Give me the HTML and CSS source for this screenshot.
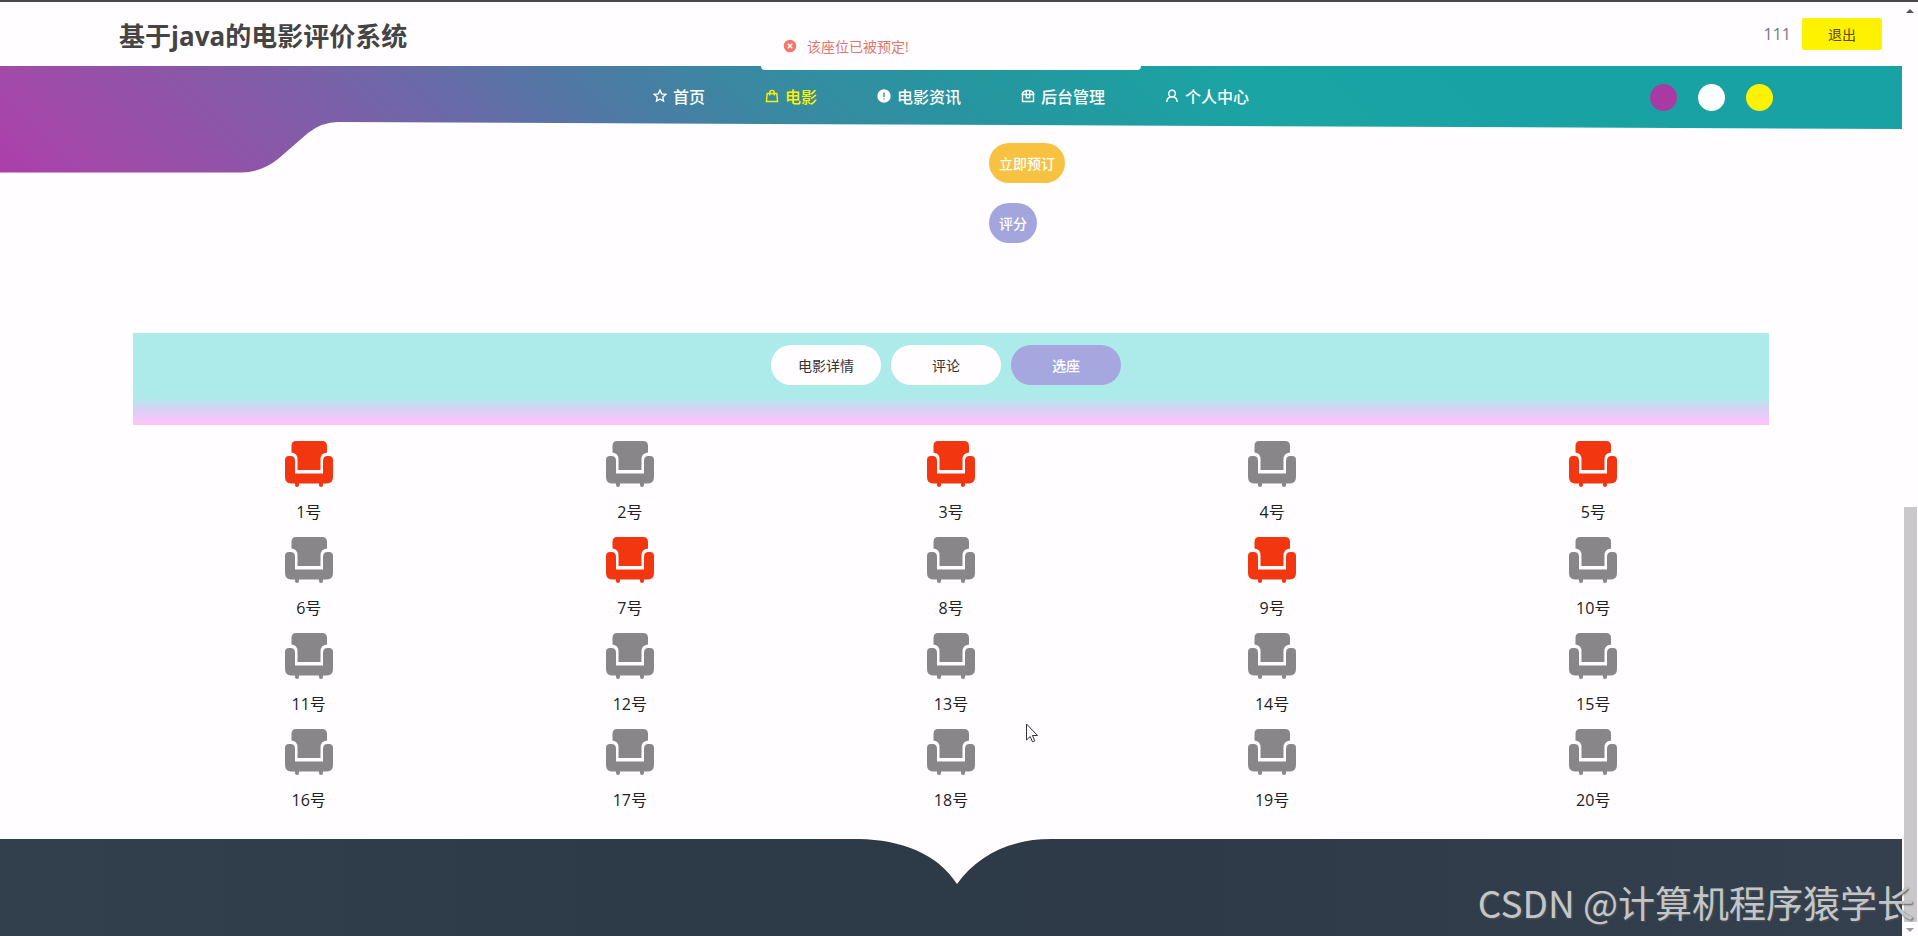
FILE: index.html
```html
<!DOCTYPE html>
<html lang="zh-CN">
<head>
    <meta charset="UTF-8">
    <title>基于java的电影评价系统</title>
    <link rel="stylesheet" href="styles.css">
</head>
<body>
    <svg class="symbols" aria-hidden="true">
        <symbol id="seat" viewBox="0 0 48 48">
            <path d="M11 1h26q5 0 5 5v6.500q-6.500 .5-6.500 7V30h-23V19.500q0-6.500-6-7V6q0-5 4.500-5z"/>
            <path d="M4 16h1.500q4.500 0 4.500 5v12.500h28V21q0-5 4.500-5H44q4 0 4 4v17q0 6-6 6.500h-4v1.500a2 2 0 0 1-4 0v-1.500H14v1.500a2 2 0 0 1-4 0v-1.500H6q-6-.5-6-6.500V20q0-4 4-4z"/>
        </symbol>
    </svg>

    <div class="page">
        <header class="header">
            <h1 class="title">基于java的电影评价系统</h1>
            <div class="user">
                <span class="user-name">111</span>
                <button class="logout">退出</button>
            </div>
        </header>

        <nav class="nav">
            <svg class="nav-bg" viewBox="0 0 1902 107" preserveAspectRatio="none" aria-hidden="true">
                <defs>
                    <linearGradient id="navFill" gradientUnits="userSpaceOnUse" x1="0" y1="107" x2="800" y2="-693">
                        <stop offset="0" stop-color="#ad3eaa"/>
                        <stop offset=".07" stop-color="#a14aaa"/>
                        <stop offset=".18" stop-color="#8b57a9"/>
                        <stop offset=".31" stop-color="#6d68a8"/>
                        <stop offset=".43" stop-color="#4c7ba4"/>
                        <stop offset=".52" stop-color="#3a88a2"/>
                        <stop offset=".66" stop-color="#25969f"/>
                        <stop offset=".83" stop-color="#1ba4a4"/>
                        <stop offset="1" stop-color="#18a2a3"/>
                    </linearGradient>
                </defs>
                <path fill="url(#navFill)" d="M0 0H1902V63L338 56Q322 56 308 67L278 93Q262 106 242 106.500H0z"/>
            </svg>
            <div class="menu">
                <a class="menu-item" href="#">
                    <svg class="icon" viewBox="0 0 14 14"><path d="M7 1.300l1.700 3.600 4 .5-2.900 2.700.7 3.900L7 10.100 3.500 12l.7-3.900L1.300 5.400l4-.5z"/></svg>
                    首页
                </a>
                <a class="menu-item active" href="#">
                    <svg class="icon" viewBox="0 0 14 14"><path d="M2.200 4.500h9.600l.8 8H1.400zM4.700 6.500V4a2.300 2.600 0 0 1 4.600 0v2.500"/></svg>
                    电影
                </a>
                <a class="menu-item" href="#">
                    <svg class="icon" viewBox="0 0 14 14"><circle class="solid" cx="7" cy="7" r="6"/><path class="mark" d="M7 3.500v4.500M7 9.500v1"/></svg>
                    电影资讯
                </a>
                <a class="menu-item" href="#">
                    <svg class="icon" viewBox="0 0 14 14"><path d="M.5 5.500h13M1.500 5.500v7h11v-7M1.200 5.500Q2 1.500 7 1.500T12.800 5.500M5.300 1.800v7h3.400v-7"/></svg>
                    后台管理
                </a>
                <a class="menu-item" href="#">
                    <svg class="icon" viewBox="0 0 14 14"><circle cx="7" cy="4.500" r="3.300"/><path d="M1.800 13q.2-5.200 5.200-5.200T12.200 13"/></svg>
                    个人中心
                </a>
            </div>
            <div class="themes">
                <button class="theme purple" aria-label="紫色"></button>
                <button class="theme white" aria-label="白色"></button>
                <button class="theme yellow" aria-label="黄色"></button>
            </div>
        </nav>

        <main class="content">
            <div class="actions">
                <button class="action book">立即预订</button>
                <button class="action rate">评分</button>
            </div>

            <div class="tabs">
                <button class="tab">电影详情</button>
                <button class="tab">评论</button>
                <button class="tab current">选座</button>
            </div>

            <div class="seats">
                <button class="seat taken"><svg><use href="#seat"/></svg>1号</button>
                <button class="seat"><svg><use href="#seat"/></svg>2号</button>
                <button class="seat taken"><svg><use href="#seat"/></svg>3号</button>
                <button class="seat"><svg><use href="#seat"/></svg>4号</button>
                <button class="seat taken"><svg><use href="#seat"/></svg>5号</button>
                <button class="seat"><svg><use href="#seat"/></svg>6号</button>
                <button class="seat taken"><svg><use href="#seat"/></svg>7号</button>
                <button class="seat"><svg><use href="#seat"/></svg>8号</button>
                <button class="seat taken"><svg><use href="#seat"/></svg>9号</button>
                <button class="seat"><svg><use href="#seat"/></svg>10号</button>
                <button class="seat"><svg><use href="#seat"/></svg>11号</button>
                <button class="seat"><svg><use href="#seat"/></svg>12号</button>
                <button class="seat"><svg><use href="#seat"/></svg>13号</button>
                <button class="seat"><svg><use href="#seat"/></svg>14号</button>
                <button class="seat"><svg><use href="#seat"/></svg>15号</button>
                <button class="seat"><svg><use href="#seat"/></svg>16号</button>
                <button class="seat"><svg><use href="#seat"/></svg>17号</button>
                <button class="seat"><svg><use href="#seat"/></svg>18号</button>
                <button class="seat"><svg><use href="#seat"/></svg>19号</button>
                <button class="seat"><svg><use href="#seat"/></svg>20号</button>
            </div>
        </main>

        <footer class="footer">
            <svg class="notch" viewBox="0 0 192 45" aria-hidden="true"><path d="M0 0C42 1 78 14 98 45C118 17 150 0 192 0z"/></svg>
        </footer>
    </div>

    <div class="scrollbar" aria-hidden="true">
        <svg class="arrow up" viewBox="0 0 8 4"><path d="M0 4L4 0l4 4z"/></svg>
        <div class="track"><div class="thumb"></div></div>
        <svg class="arrow down" viewBox="0 0 8 4"><path d="M0 0h8L4 4z"/></svg>
    </div>

    <div class="message" role="alert">
        <svg class="message-icon" viewBox="0 0 14 14"><circle cx="7" cy="7" r="7"/><path d="M4.800 4.800l4.400 4.400M9.200 4.800L4.800 9.200"/></svg>
        该座位已被预定!
    </div>

    <svg class="cursor" viewBox="0 0 12 20" aria-hidden="true"><path d="M.5 1v16l3.700-3.500L6.500 18.800l2.300-1-2.400-5.300h5.100z"/></svg>

    <div class="watermark">CSDN @计算机程序猿学长</div>
</body>
</html>
```

FILE: styles.css
```css
* {
    box-sizing: border-box;
}
body {
    margin: 0;
    min-height: 100vh;
    display: flex;
    position: relative;
    border-top: 2px solid #4b484c;
    background: #fffdff;
    color: #222;
    font-family: "Open Sans", "Noto Sans CJK SC", sans-serif;
    font-size: 14px;
    overflow: hidden;
}
button {
    border: none;
    padding: 0;
    background: none;
    color: inherit;
    font: inherit;
    cursor: pointer;
}
a {
    color: inherit;
    text-decoration: none;
}
.symbols {
    position: absolute;
    width: 0;
    height: 0;
}
.page {
    flex: 1;
    display: flex;
    flex-direction: column;
}

/* header */
.header {
    height: 64px;
    padding: 0 20px 0 119px;
    display: flex;
    align-items: center;
    justify-content: space-between;
}
.title {
    margin: 0;
    padding-top: 4px;
    color: #444;
    font-size: 26px;
    line-height: 40px;
}
.user {
    display: flex;
    align-items: center;
    gap: 11px;
}
.user-name {
    color: #777;
    font-size: 16px;
}
.logout {
    width: 80px;
    height: 32px;
    border-radius: 2px;
    background: #fff200;
    color: #5c4a14;
}

/* nav */
.nav {
    position: relative;
    height: 62px;
    display: grid;
    grid-template-columns: 1fr auto 1fr;
    align-items: center;
}
.nav-bg {
    position: absolute;
    top: 0;
    left: 0;
    width: 100%;
    height: 107px;
}
.menu {
    position: relative;
    grid-column: 2;
    display: flex;
    gap: 60px;
    padding-bottom: 2px;
    color: #fff;
    font-size: 16px;
    font-weight: 500;
}
.menu-item {
    display: flex;
    align-items: center;
    gap: 6px;
}
.menu-item.active {
    color: #fff200;
}
.icon {
    width: 14px;
    height: 14px;
    fill: none;
    stroke: currentColor;
    stroke-width: 1.4;
}
.icon .solid {
    fill: currentColor;
}
.icon .mark {
    stroke: #2f8fa0;
}
.themes {
    position: relative;
    display: flex;
    justify-content: flex-end;
    gap: 21px;
    padding-right: 129px;
}
.theme {
    width: 27px;
    height: 27px;
    border-radius: 50%;
}
.purple {
    background: #a83ba3;
}
.white {
    background: #fff;
}
.yellow {
    background: #fff200;
}

/* content */
.content {
    position: relative;
    width: 86%;
    margin: 0 auto;
    padding-top: 15px;
}
.actions {
    display: flex;
    flex-direction: column;
    align-items: flex-start;
    gap: 20px;
    padding-left: calc(50% + 38px);
    margin-bottom: 90px;
}
.action {
    height: 40px;
    padding: 0 10px;
    border-radius: 20px;
    color: #fff;
    font-weight: 500;
}
.book {
    background: #f7c242;
}
.rate {
    background: #a5a5de;
}
.tabs {
    height: 92px;
    padding: 12px 10px 0 0;
    display: flex;
    justify-content: center;
    align-items: flex-start;
    gap: 10px;
    background: linear-gradient(#adebeb 70%, #d6d0f4 83%, #fbc5fa 97%);
}
.tab {
    width: 110px;
    height: 40px;
    border-radius: 20px;
    background: #fffdff;
    color: #333;
}
.tab.current {
    background: #a7a7df;
    color: #fff;
    font-weight: 500;
}
.seats {
    display: grid;
    grid-template-columns: repeat(5, 1fr);
    padding: 15px 15px;
}
.seat {
    height: 96px;
    display: flex;
    flex-direction: column;
    align-items: center;
    gap: 12px;
    font-size: 16px;
    line-height: 24px;
    color: #222;
}
.seat svg {
    width: 48px;
    height: 48px;
    fill: #888688;
}
.seat.taken svg {
    fill: #f23710;
}

/* footer */
.footer {
    flex: 1;
    min-height: 97px;
    padding-left: 8px;
    display: flex;
    justify-content: center;
    align-items: flex-start;
    background: linear-gradient(90deg, #323f4d, #2d3a47 35%, #2e3a48 60%, #34404e);
}
.notch {
    width: 192px;
    height: 45px;
    fill: #fffdff;
}

/* scrollbar */
.scrollbar {
    width: 16px;
    display: flex;
    flex-direction: column;
    align-items: center;
    padding: 7px 0 4px;
    gap: 6px;
}
.arrow {
    width: 8px;
    height: 4px;
    fill: #555;
}
.arrow.down {
    fill: #999;
}
.track {
    flex: 1;
    width: 13px;
    display: flex;
    align-items: flex-end;
}
.thumb {
    width: 100%;
    height: 46%;
    background: #cbc8cc;
}

/* overlays */
.message {
    position: absolute;
    top: 20px;
    left: 50%;
    width: 380px;
    height: 48px;
    margin-left: -198px;
    padding-left: 22px;
    display: flex;
    align-items: center;
    gap: 10px;
    border-radius: 4px;
    background: #fffdff;
    color: #e0776e;
}
.message-icon {
    width: 14px;
    height: 14px;
    fill: #f3776b;
    stroke: #fff;
    stroke-width: 1.4;
}
.cursor {
    position: absolute;
    top: 721px;
    left: 1026px;
    width: 12px;
    height: 20px;
    fill: #fff;
    stroke: #333;
}
.watermark {
    position: absolute;
    right: 4px;
    bottom: 6px;
    color: #c3c6c9;
    font-family: "Noto Sans CJK SC", sans-serif;
    font-size: 37px;
    line-height: 56px;
    text-shadow: 1px 1px 2px #555;
}
```
